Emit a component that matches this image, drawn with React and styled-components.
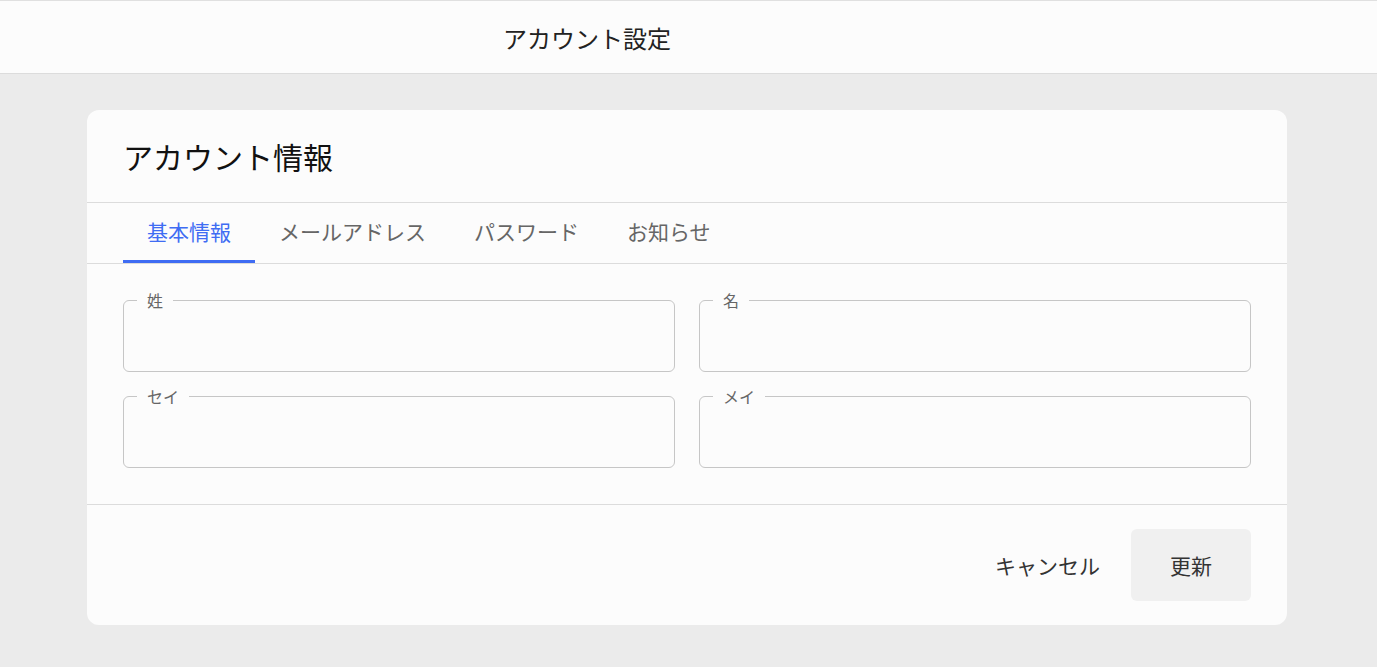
import React, { useState } from "react";
import styled, { createGlobalStyle } from "styled-components";

const Global = createGlobalStyle`
  html, body { margin: 0; padding: 0; }
  body {
    background: #ebebeb;
    font-family: "Noto Sans CJK JP", "Noto Sans", sans-serif;
    color: #222;
  }
  * { box-sizing: border-box; }
`;

const Page = styled.div`
  min-height: 667px;
  display: flex;
  flex-direction: column;
`;

const TopBar = styled.header`
  height: 74px;
  background: #fcfcfc;
  border-top: 1px solid #e0e0e0;
  border-bottom: 1px solid #dcdcdc;
  display: flex;
  align-items: center;
  padding-left: 503px;
`;

const TopTitle = styled.h1`
  margin: 0;
  font-size: 24px;
  font-weight: 400;
  color: #222;
  line-height: 1;
  position: relative;
  top: 1px;
`;

const Main = styled.main`
  padding: 36px 0 42px 87px;
`;

const Card = styled.section`
  width: 1200px;
  background: #fcfcfc;
  border-radius: 12px;
  overflow: hidden;
`;

const CardHead = styled.div`
  height: 93px;
  display: flex;
  align-items: center;
  padding: 0 36px;
  border-bottom: 1px solid #dcdcdc;
`;

const CardTitle = styled.h2`
  margin: 0;
  font-size: 30px;
  font-weight: 400;
  color: #111;
  line-height: 1;
`;

const TabBar = styled.nav`
  display: flex;
  padding: 0 36px;
  height: 61px;
  border-bottom: 1px solid #dcdcdc;
`;

const Tab = styled.button`
  appearance: none;
  border: none;
  background: none;
  margin: 0;
  padding: 0 24px;
  font-family: inherit;
  font-size: 21px;
  line-height: 1;
  color: ${(p) => (p.$active ? "#3f6cf3" : "#666")};
  border-bottom: 3px solid ${(p) => (p.$active ? "#3f6cf3" : "transparent")};
  display: flex;
  align-items: center;
  cursor: pointer;
`;

const FieldGrid = styled.div`
  display: grid;
  grid-template-columns: 1fr 1fr;
  gap: 24px;
  padding: 36px;
  border-bottom: 1px solid #dcdcdc;
`;

const Field = styled.label`
  position: relative;
  display: block;
  height: 72px;
  border: 1px solid #c6c6c6;
  border-radius: 6px;
`;

const FieldLabel = styled.span`
  position: absolute;
  left: 13px;
  top: -10px;
  padding: 0 10px;
  background: #fcfcfc;
  font-size: 16px;
  line-height: 18px;
  color: #666;
`;

const Input = styled.input`
  width: 100%;
  height: 100%;
  border: none;
  outline: none;
  background: transparent;
  padding: 0 22px;
  font-family: inherit;
  font-size: 18px;
  color: #222;
`;

const Footer = styled.div`
  display: flex;
  justify-content: flex-end;
  align-items: center;
  gap: 8px;
  padding: 24px 36px;
`;

const Button = styled.button`
  appearance: none;
  border: none;
  font-family: inherit;
  font-size: 21px;
  line-height: 1;
  color: #333;
  height: 72px;
  border-radius: 6px;
  cursor: pointer;
  background: ${(p) => (p.$filled ? "#f0f0f0" : "transparent")};
  width: ${(p) => (p.$filled ? "120px" : "auto")};
  padding: ${(p) => (p.$filled ? "0" : "0 23px")};
`;

const tabs = ["基本情報", "メールアドレス", "パスワード", "お知らせ"];
const fields = ["姓", "名", "セイ", "メイ"];

export default function App() {
  const [active, setActive] = useState(0);
  return (
    <Page>
      <Global />
      <TopBar>
        <TopTitle>アカウント設定</TopTitle>
      </TopBar>
      <Main>
        <Card>
          <CardHead>
            <CardTitle>アカウント情報</CardTitle>
          </CardHead>
          <TabBar>
            {tabs.map((t, i) => (
              <Tab key={t} $active={i === active} onClick={() => setActive(i)}>
                {t}
              </Tab>
            ))}
          </TabBar>
          <FieldGrid>
            {fields.map((f) => (
              <Field key={f}>
                <FieldLabel>{f}</FieldLabel>
                <Input />
              </Field>
            ))}
          </FieldGrid>
          <Footer>
            <Button>キャンセル</Button>
            <Button $filled>更新</Button>
          </Footer>
        </Card>
      </Main>
    </Page>
  );
}
